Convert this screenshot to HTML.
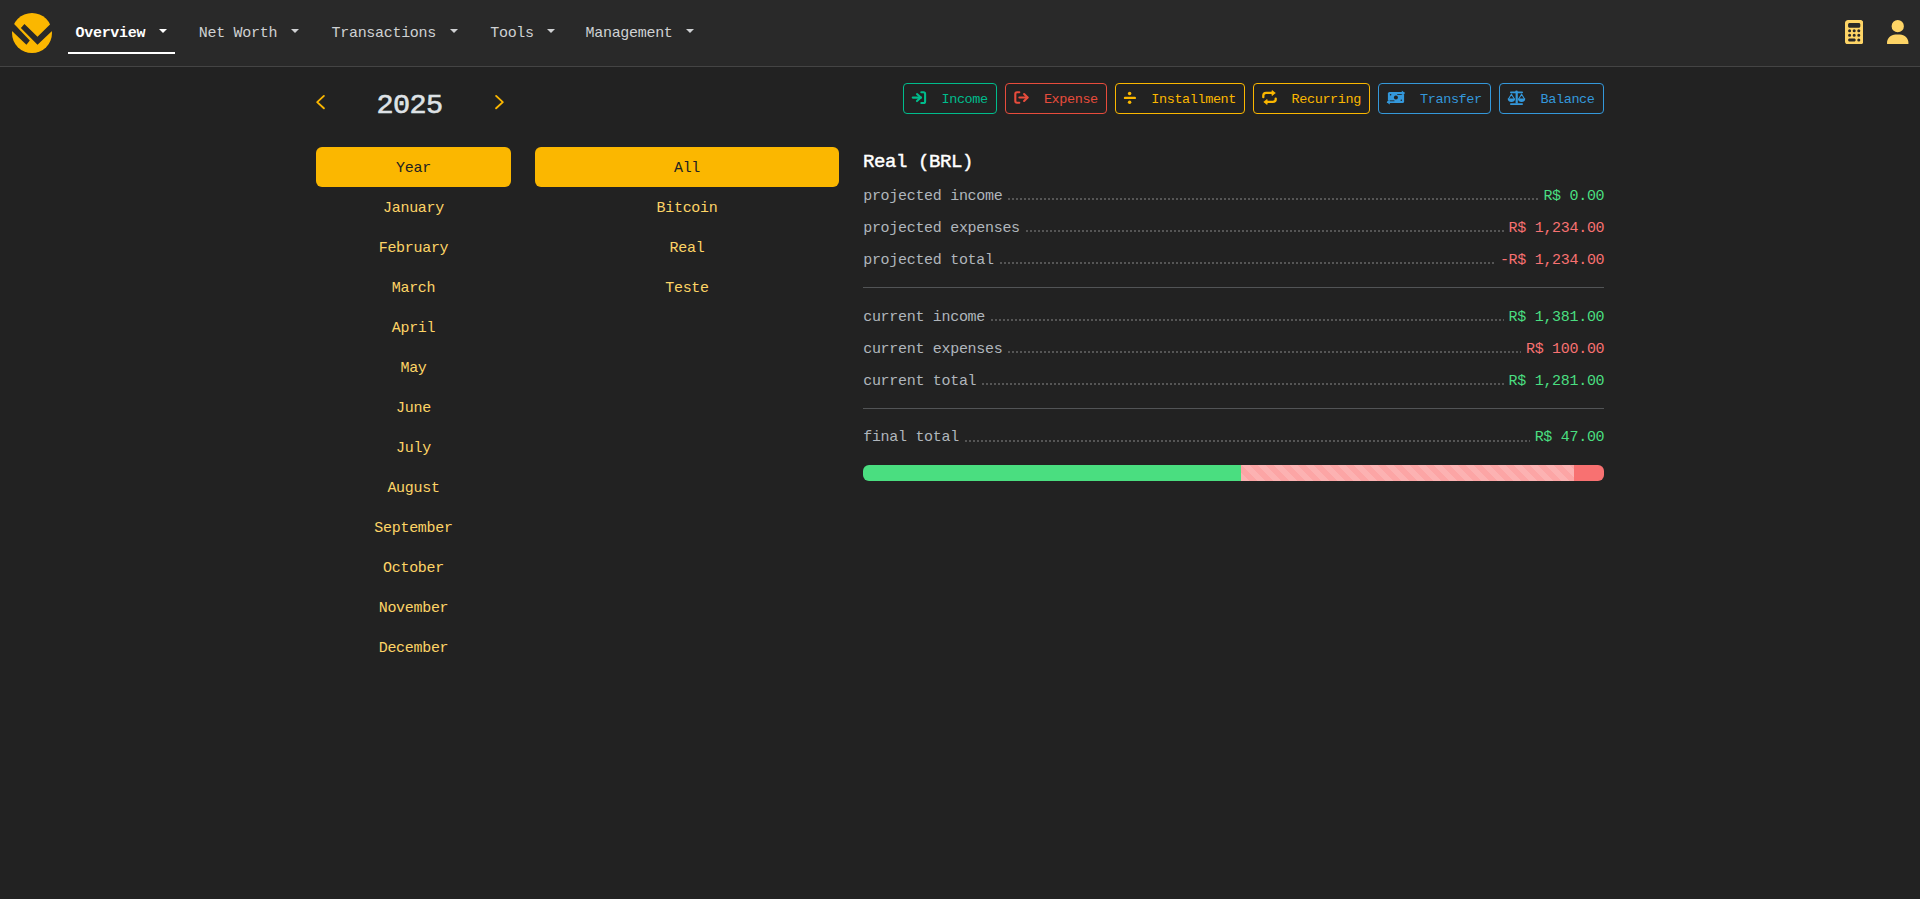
<!DOCTYPE html>
<html><head><meta charset="utf-8"><title>WYGIWYH</title>
<style>
html,body{margin:0;padding:0;}
body{width:1920px;height:899px;overflow:hidden;background:#222222;position:relative;font-family:"Liberation Mono",monospace;}
.t{position:absolute;white-space:nowrap;}
</style></head><body>
<div style="position:absolute;left:0;top:0;width:1920px;height:66px;background:#292929;border-bottom:1px solid #444;"></div>
<svg style="position:absolute;left:12px;top:13px" width="40" height="40" viewBox="0 0 40 40">
<defs><mask id="lm" maskUnits="userSpaceOnUse" x="-5" y="-5" width="50" height="50"><rect x="-5" y="-5" width="50" height="50" fill="#000"/><circle cx="20" cy="20" r="20" fill="#fff"/>
<polygon points="-5,3.4 17.8,27.5 14.4,31.8 -5,13.2" fill="#000"/>
<polygon points="12.44,10.97 25.5,23.7 45,4.77 45,13.3 25.5,31.8 8.87,14.89" fill="#000"/></mask></defs>
<rect x="0" y="0" width="40" height="40" fill="#fbb700" mask="url(#lm)"/>
</svg>
<div class="t" style="top:25.51px;font-size:15px;line-height:15px;letter-spacing:-0.3px;color:#ffffff;font-weight:bold;left:75.57px;">Overview</div>
<div style="position:absolute;left:159.00px;top:29px;width:0;height:0;border-left:4.25px solid transparent;border-right:4.25px solid transparent;border-top:4.8px solid #ffffff;"></div>
<div class="t" style="top:25.51px;font-size:15px;line-height:15px;letter-spacing:-0.3px;color:#cfd1d3;font-weight:normal;left:198.81px;">Net Worth</div>
<div style="position:absolute;left:291.00px;top:29px;width:0;height:0;border-left:4.25px solid transparent;border-right:4.25px solid transparent;border-top:4.8px solid #cfd1d3;"></div>
<div class="t" style="top:25.51px;font-size:15px;line-height:15px;letter-spacing:-0.3px;color:#cfd1d3;font-weight:normal;left:331.55px;">Transactions</div>
<div style="position:absolute;left:450.00px;top:29px;width:0;height:0;border-left:4.25px solid transparent;border-right:4.25px solid transparent;border-top:4.8px solid #cfd1d3;"></div>
<div class="t" style="top:25.51px;font-size:15px;line-height:15px;letter-spacing:-0.3px;color:#cfd1d3;font-weight:normal;left:490.25px;">Tools</div>
<div style="position:absolute;left:546.60px;top:29px;width:0;height:0;border-left:4.25px solid transparent;border-right:4.25px solid transparent;border-top:4.8px solid #cfd1d3;"></div>
<div class="t" style="top:25.51px;font-size:15px;line-height:15px;letter-spacing:-0.3px;color:#cfd1d3;font-weight:normal;left:585.55px;">Management</div>
<div style="position:absolute;left:686.30px;top:29px;width:0;height:0;border-left:4.25px solid transparent;border-right:4.25px solid transparent;border-top:4.8px solid #cfd1d3;"></div>
<div style="position:absolute;left:68px;top:52px;width:107px;height:2px;background:#fff"></div>
<svg style="position:absolute;left:1845px;top:19.6px" width="18.4" height="24.5" viewBox="0 0 384 512"><path fill="#fdd466" d="M64 0C28.7 0 0 28.7 0 64L0 448c0 35.3 28.7 64 64 64l256 0c35.3 0 64-28.7 64-64l0-384c0-35.3-28.7-64-64-64L64 0zM96 64l192 0c17.7 0 32 14.3 32 32l0 32c0 17.7-14.3 32-32 32L96 160c-17.7 0-32-14.3-32-32l0-32c0-17.7 14.3-32 32-32zm32 160a32 32 0 1 1 -64 0 32 32 0 1 1 64 0zM96 352a32 32 0 1 1 0-64 32 32 0 1 1 0 64zM64 416c0-17.7 14.3-32 32-32l96 0c17.7 0 32 14.3 32 32s-14.3 32-32 32l-96 0c-17.7 0-32-14.3-32-32zM192 256a32 32 0 1 1 0-64 32 32 0 1 1 0 64zm32 64a32 32 0 1 1 -64 0 32 32 0 1 1 64 0zm64-64a32 32 0 1 1 0-64 32 32 0 1 1 0 64zm32 64a32 32 0 1 1 -64 0 32 32 0 1 1 64 0zM288 448a32 32 0 1 1 0-64 32 32 0 1 1 0 64z"/></svg>
<svg style="position:absolute;left:1887px;top:19.6px" width="21.5" height="24.6" viewBox="0 0 448 512"><path fill="#fdd466" d="M224 256A128 128 0 1 0 224 0a128 128 0 1 0 0 256zm-45.7 48C79.8 304 0 383.8 0 482.3C0 498.7 13.3 512 29.7 512l388.6 0c16.4 0 29.7-13.3 29.7-29.7C448 383.8 368.2 304 269.7 304l-91.4 0z"/></svg>
<svg style="position:absolute;left:315px;top:94px" width="11" height="16" viewBox="0 0 11 16"><path d="M8.9 1.9 L2.2 8.1 L8.9 14.3" stroke="#fbb700" stroke-width="1.9" fill="none" stroke-linecap="round" stroke-linejoin="round"/></svg>
<svg style="position:absolute;left:493.5px;top:94px" width="11" height="16" viewBox="0 0 11 16"><path d="M2.1 1.9 L8.8 8.1 L2.1 14.3" stroke="#fbb700" stroke-width="1.9" fill="none" stroke-linecap="round" stroke-linejoin="round"/></svg>
<div class="t" style="top:91.57px;font-size:28.5px;line-height:28.5px;letter-spacing:-0.6px;color:#dee2e6;font-weight:normal;left:109.60px;width:600px;text-align:center;-webkit-text-stroke:0.6px #dee2e6;">2025</div>
<div style="position:absolute;left:316px;top:147px;width:195px;height:40px;background:#fbb700;border-radius:6px"></div>
<div style="position:absolute;left:535px;top:147px;width:304px;height:40px;background:#fbb700;border-radius:6px"></div>
<div class="t" style="top:161.21px;font-size:15px;line-height:15px;letter-spacing:-0.3px;color:#222222;font-weight:normal;left:113.50px;width:600px;text-align:center;">Year</div>
<div class="t" style="top:201.21px;font-size:15px;line-height:15px;letter-spacing:-0.3px;color:#fdd466;font-weight:normal;left:113.50px;width:600px;text-align:center;">January</div>
<div class="t" style="top:241.21px;font-size:15px;line-height:15px;letter-spacing:-0.3px;color:#fdd466;font-weight:normal;left:113.50px;width:600px;text-align:center;">February</div>
<div class="t" style="top:281.21px;font-size:15px;line-height:15px;letter-spacing:-0.3px;color:#fdd466;font-weight:normal;left:113.50px;width:600px;text-align:center;">March</div>
<div class="t" style="top:321.21px;font-size:15px;line-height:15px;letter-spacing:-0.3px;color:#fdd466;font-weight:normal;left:113.50px;width:600px;text-align:center;">April</div>
<div class="t" style="top:361.21px;font-size:15px;line-height:15px;letter-spacing:-0.3px;color:#fdd466;font-weight:normal;left:113.50px;width:600px;text-align:center;">May</div>
<div class="t" style="top:401.21px;font-size:15px;line-height:15px;letter-spacing:-0.3px;color:#fdd466;font-weight:normal;left:113.50px;width:600px;text-align:center;">June</div>
<div class="t" style="top:441.21px;font-size:15px;line-height:15px;letter-spacing:-0.3px;color:#fdd466;font-weight:normal;left:113.50px;width:600px;text-align:center;">July</div>
<div class="t" style="top:481.21px;font-size:15px;line-height:15px;letter-spacing:-0.3px;color:#fdd466;font-weight:normal;left:113.50px;width:600px;text-align:center;">August</div>
<div class="t" style="top:521.21px;font-size:15px;line-height:15px;letter-spacing:-0.3px;color:#fdd466;font-weight:normal;left:113.50px;width:600px;text-align:center;">September</div>
<div class="t" style="top:561.21px;font-size:15px;line-height:15px;letter-spacing:-0.3px;color:#fdd466;font-weight:normal;left:113.50px;width:600px;text-align:center;">October</div>
<div class="t" style="top:601.21px;font-size:15px;line-height:15px;letter-spacing:-0.3px;color:#fdd466;font-weight:normal;left:113.50px;width:600px;text-align:center;">November</div>
<div class="t" style="top:641.21px;font-size:15px;line-height:15px;letter-spacing:-0.3px;color:#fdd466;font-weight:normal;left:113.50px;width:600px;text-align:center;">December</div>
<div class="t" style="top:161.21px;font-size:15px;line-height:15px;letter-spacing:-0.3px;color:#222222;font-weight:normal;left:387.00px;width:600px;text-align:center;">All</div>
<div class="t" style="top:201.21px;font-size:15px;line-height:15px;letter-spacing:-0.3px;color:#fdd466;font-weight:normal;left:387.00px;width:600px;text-align:center;">Bitcoin</div>
<div class="t" style="top:241.21px;font-size:15px;line-height:15px;letter-spacing:-0.3px;color:#fdd466;font-weight:normal;left:387.00px;width:600px;text-align:center;">Real</div>
<div class="t" style="top:281.21px;font-size:15px;line-height:15px;letter-spacing:-0.3px;color:#fdd466;font-weight:normal;left:387.00px;width:600px;text-align:center;">Teste</div>
<div style="position:absolute;left:903px;top:83px;width:92px;height:29px;border:1px solid #00bc8c;border-radius:4px"></div>
<svg style="position:absolute;left:903px;top:83px" width="31" height="31" viewBox="0 0 31 31"><path d="M9.8 14.6 H18" stroke="#00bc8c" stroke-width="2.2" stroke-linecap="round"/><path d="M14 11.1 L17.8 14.6 L14 18.1" stroke="#00bc8c" stroke-width="2.1" fill="none" stroke-linecap="round" stroke-linejoin="round"/><path d="M18.3 9.3 H20.5 Q22.1 9.3 22.1 10.9 V18.4 Q22.1 20 20.5 20 H18.3" stroke="#00bc8c" stroke-width="2.1" fill="none" stroke-linecap="round"/></svg>
<div class="t" style="top:92.66px;font-size:13.5px;line-height:13.5px;letter-spacing:-0.4px;color:#00bc8c;font-weight:normal;left:941.50px;">Income</div>
<div style="position:absolute;left:1005px;top:83px;width:100px;height:29px;border:1px solid #e74c3c;border-radius:4px"></div>
<svg style="position:absolute;left:1005px;top:83px" width="31" height="31" viewBox="0 0 31 31"><path d="M14.3 9.3 H12 Q10.3 9.3 10.3 11 V18.1 Q10.3 19.8 12 19.8 H14.3" stroke="#e74c3c" stroke-width="2.1" fill="none" stroke-linecap="round"/><path d="M14.4 14.5 H22.4" stroke="#e74c3c" stroke-width="2.2" stroke-linecap="round"/><path d="M19.1 11.1 L22.6 14.5 L19.1 17.9" stroke="#e74c3c" stroke-width="2.1" fill="none" stroke-linecap="round" stroke-linejoin="round"/></svg>
<div class="t" style="top:92.66px;font-size:13.5px;line-height:13.5px;letter-spacing:-0.4px;color:#e74c3c;font-weight:normal;left:1043.90px;">Expense</div>
<div style="position:absolute;left:1115px;top:83px;width:128px;height:29px;border:1px solid #fbb700;border-radius:4px"></div>
<svg style="position:absolute;left:1115px;top:83px" width="31" height="31" viewBox="0 0 31 31"><circle cx="14.6" cy="10.6" r="1.75" fill="#fbb700"/><circle cx="14.6" cy="19.3" r="1.75" fill="#fbb700"/><path d="M10 14.9 H19.8" stroke="#fbb700" stroke-width="2.4" stroke-linecap="round"/></svg>
<div class="t" style="top:92.66px;font-size:13.5px;line-height:13.5px;letter-spacing:-0.4px;color:#fbb700;font-weight:normal;left:1151.30px;">Installment</div>
<div style="position:absolute;left:1253px;top:83px;width:115px;height:29px;border:1px solid #fbb700;border-radius:4px"></div>
<svg style="position:absolute;left:1253px;top:83px" width="31" height="31" viewBox="0 0 31 31"><path d="M10.3 14.2 V12.6 Q10.3 9.9 13.1 9.9 H19.5" stroke="#fbb700" stroke-width="2.3" fill="none" stroke-linecap="round"/><polygon points="19,7.6 22.3,10 19,12.5" fill="#fbb700" stroke="#fbb700" stroke-width="0.8" stroke-linejoin="round"/><path d="M22.7 15.6 V16.6 Q22.7 18.9 19.9 18.9 H13.6" stroke="#fbb700" stroke-width="2.3" fill="none" stroke-linecap="round"/><polygon points="14.1,16.5 10.8,18.9 14.1,21.4" fill="#fbb700" stroke="#fbb700" stroke-width="0.8" stroke-linejoin="round"/></svg>
<div class="t" style="top:92.66px;font-size:13.5px;line-height:13.5px;letter-spacing:-0.4px;color:#fbb700;font-weight:normal;left:1291.60px;">Recurring</div>
<div style="position:absolute;left:1378px;top:83px;width:111px;height:29px;border:1px solid #3498db;border-radius:4px"></div>
<svg style="position:absolute;left:1378px;top:83px" width="31" height="31" viewBox="0 0 31 31"><rect x="9.9" y="9" width="16.2" height="11" rx="1.6" fill="#3498db"/><circle cx="17.9" cy="14.6" r="2" fill="#222222"/><circle cx="12.6" cy="11.8" r="0.8" fill="#222222"/><circle cx="23.3" cy="17.3" r="0.8" fill="#222222"/><path d="M19.2 10 H25.2" stroke="#222222" stroke-width="3.6"/><path d="M19.2 10 H25.6" stroke="#3498db" stroke-width="1.8" stroke-linecap="round"/><polygon points="23.8,7.6 27,10 23.8,12.4" fill="#3498db"/><path d="M16.4 19.2 H10.4" stroke="#222222" stroke-width="3.6"/><path d="M16.4 19.2 H10" stroke="#3498db" stroke-width="1.8" stroke-linecap="round"/><polygon points="11.8,16.8 8.6,19.2 11.8,21.6" fill="#3498db"/></svg>
<div class="t" style="top:92.66px;font-size:13.5px;line-height:13.5px;letter-spacing:-0.4px;color:#3498db;font-weight:normal;left:1420.10px;">Transfer</div>
<div style="position:absolute;left:1499px;top:83px;width:103px;height:29px;border:1px solid #3498db;border-radius:4px"></div>
<svg style="position:absolute;left:1499px;top:83px" width="31" height="31" viewBox="0 0 31 31"><rect x="11" y="8.6" width="13" height="1.6" rx="0.8" fill="#3498db"/><circle cx="17.5" cy="8.9" r="1.3" fill="#3498db"/><rect x="16.6" y="9.5" width="2.2" height="11" fill="#3498db"/><rect x="11" y="20.2" width="13" height="1.8" rx="0.9" fill="#3498db"/><path d="M12.4 11.2 L9.6 15.7 M12.4 11.2 L15.2 15.7" stroke="#3498db" stroke-width="1.1" stroke-linecap="round"/><path d="M8.7 15.5 H16.1 Q16.1 18.9 12.4 18.9 Q8.7 18.9 8.7 15.5 Z" fill="#3498db"/><path d="M22.6 11.2 L19.8 15.7 M22.6 11.2 L25.4 15.7" stroke="#3498db" stroke-width="1.1" stroke-linecap="round"/><path d="M18.9 15.5 H26.3 Q26.3 18.9 22.6 18.9 Q18.9 18.9 18.9 15.5 Z" fill="#3498db"/></svg>
<div class="t" style="top:92.66px;font-size:13.5px;line-height:13.5px;letter-spacing:-0.4px;color:#3498db;font-weight:normal;left:1540.60px;">Balance</div>
<div class="t" style="top:153.04px;font-size:19px;line-height:19px;letter-spacing:-0.4px;color:#ffffff;font-weight:normal;left:863.00px;-webkit-text-stroke:0.45px #ffffff;">Real (BRL)</div>
<div class="t" style="top:189.11px;font-size:15px;line-height:15px;letter-spacing:-0.3px;color:#b0b6bc;font-weight:normal;left:863.20px;">projected income</div>
<div class="t" style="top:189.11px;font-size:15px;line-height:15px;letter-spacing:-0.3px;color:#4ade80;font-weight:normal;left:1004.30px;width:600px;text-align:right;">R$ 0.00</div>
<div style="position:absolute;left:1008.4px;top:198.3px;width:530.0px;height:2px;background:repeating-linear-gradient(90deg,#555 0 2px,transparent 2px 4px)"></div>
<div class="t" style="top:221.11px;font-size:15px;line-height:15px;letter-spacing:-0.3px;color:#b0b6bc;font-weight:normal;left:863.20px;">projected expenses</div>
<div class="t" style="top:221.11px;font-size:15px;line-height:15px;letter-spacing:-0.3px;color:#f87171;font-weight:normal;left:1004.30px;width:600px;text-align:right;">R$ 1,234.00</div>
<div style="position:absolute;left:1025.8px;top:230.3px;width:477.8px;height:2px;background:repeating-linear-gradient(90deg,#555 0 2px,transparent 2px 4px)"></div>
<div class="t" style="top:253.11px;font-size:15px;line-height:15px;letter-spacing:-0.3px;color:#b0b6bc;font-weight:normal;left:863.20px;">projected total</div>
<div class="t" style="top:253.11px;font-size:15px;line-height:15px;letter-spacing:-0.3px;color:#f87171;font-weight:normal;left:1004.30px;width:600px;text-align:right;">-R$ 1,234.00</div>
<div style="position:absolute;left:999.7px;top:262.3px;width:495.2px;height:2px;background:repeating-linear-gradient(90deg,#555 0 2px,transparent 2px 4px)"></div>
<div style="position:absolute;left:863px;top:287px;width:741px;height:1px;background:#525456"></div>
<div class="t" style="top:310.11px;font-size:15px;line-height:15px;letter-spacing:-0.3px;color:#b0b6bc;font-weight:normal;left:863.20px;">current income</div>
<div class="t" style="top:310.11px;font-size:15px;line-height:15px;letter-spacing:-0.3px;color:#4ade80;font-weight:normal;left:1004.30px;width:600px;text-align:right;">R$ 1,381.00</div>
<div style="position:absolute;left:991.0px;top:319.3px;width:512.6px;height:2px;background:repeating-linear-gradient(90deg,#555 0 2px,transparent 2px 4px)"></div>
<div class="t" style="top:342.11px;font-size:15px;line-height:15px;letter-spacing:-0.3px;color:#b0b6bc;font-weight:normal;left:863.20px;">current expenses</div>
<div class="t" style="top:342.11px;font-size:15px;line-height:15px;letter-spacing:-0.3px;color:#f87171;font-weight:normal;left:1004.30px;width:600px;text-align:right;">R$ 100.00</div>
<div style="position:absolute;left:1008.4px;top:351.3px;width:512.6px;height:2px;background:repeating-linear-gradient(90deg,#555 0 2px,transparent 2px 4px)"></div>
<div class="t" style="top:374.11px;font-size:15px;line-height:15px;letter-spacing:-0.3px;color:#b0b6bc;font-weight:normal;left:863.20px;">current total</div>
<div class="t" style="top:374.11px;font-size:15px;line-height:15px;letter-spacing:-0.3px;color:#4ade80;font-weight:normal;left:1004.30px;width:600px;text-align:right;">R$ 1,281.00</div>
<div style="position:absolute;left:982.3px;top:383.3px;width:521.3px;height:2px;background:repeating-linear-gradient(90deg,#555 0 2px,transparent 2px 4px)"></div>
<div style="position:absolute;left:863px;top:408px;width:741px;height:1px;background:#525456"></div>
<div class="t" style="top:430.31px;font-size:15px;line-height:15px;letter-spacing:-0.3px;color:#b0b6bc;font-weight:normal;left:863.20px;">final total</div>
<div class="t" style="top:430.31px;font-size:15px;line-height:15px;letter-spacing:-0.3px;color:#4ade80;font-weight:normal;left:1004.30px;width:600px;text-align:right;">R$ 47.00</div>
<div style="position:absolute;left:964.9px;top:439.5px;width:564.8px;height:2px;background:repeating-linear-gradient(90deg,#555 0 2px,transparent 2px 4px)"></div>
<div style="position:absolute;left:863px;top:465px;width:741px;height:16px;border-radius:6px;overflow:hidden;display:flex">
<div style="width:378px;background:#4ade80"></div>
<div style="width:333px;background-color:#fca5a5;background-image:linear-gradient(45deg,rgba(255,255,255,.15) 25%,transparent 25%,transparent 50%,rgba(255,255,255,.15) 50%,rgba(255,255,255,.15) 75%,transparent 75%,transparent);background-size:16px 16px"></div>
<div style="width:30px;background:#f87171"></div>
</div>

</body></html>
